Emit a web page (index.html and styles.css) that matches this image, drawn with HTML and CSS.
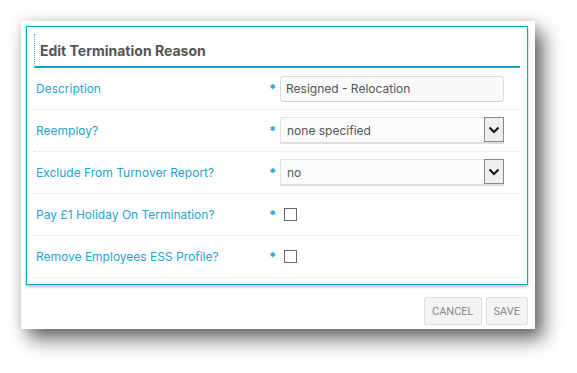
FILE: index.html
```html
<!DOCTYPE html>
<html lang="en">
<head>
    <meta charset="UTF-8">
    <title>Edit Termination Reason</title>
    <link rel="stylesheet" href="styles.css">
</head>
<body>
    <div class="dialog">
        <div class="card">
            <h3 class="card-title">Edit Termination Reason</h3>

            <div class="row">
                <label for="description">Description</label>
                <span class="req">*</span>
                <input type="text" id="description" class="text-input" value="Resigned - Relocation">
            </div>

            <div class="row">
                <label for="reemploy">Reemploy?</label>
                <span class="req">*</span>
                <div class="select-wrap">
                    <select id="reemploy">
                        <option>none specified</option>
                        <option>yes</option>
                        <option>no</option>
                    </select>
                    <span class="select-arrow">
                        <svg width="12" height="8" viewBox="0 0 12 8"><path d="M1.5 1.5 L6 6 L10.5 1.5" fill="none" stroke="#111" stroke-width="2"/></svg>
                    </span>
                </div>
            </div>

            <div class="row">
                <label for="exclude">Exclude From Turnover Report?</label>
                <span class="req">*</span>
                <div class="select-wrap">
                    <select id="exclude">
                        <option>no</option>
                        <option>yes</option>
                    </select>
                    <span class="select-arrow">
                        <svg width="12" height="8" viewBox="0 0 12 8"><path d="M1.5 1.5 L6 6 L10.5 1.5" fill="none" stroke="#111" stroke-width="2"/></svg>
                    </span>
                </div>
            </div>

            <div class="row">
                <label for="holiday">Pay £1 Holiday On Termination?</label>
                <span class="req">*</span>
                <div><input type="checkbox" id="holiday" class="check"></div>
            </div>

            <div class="row">
                <label for="ess">Remove Employees ESS Profile?</label>
                <span class="req">*</span>
                <div><input type="checkbox" id="ess" class="check"></div>
            </div>
        </div>

        <div class="actions">
            <button type="button">CANCEL</button>
            <button type="button">SAVE</button>
        </div>
    </div>
</body>
</html>
```

FILE: styles.css
```css
body { margin: 0; min-height: 373px; background-color: #fff; font-family: Inter, "Noto Sans", sans-serif; }

.dialog {
    width: 502px;
    margin: 21px 0 0 21px;
    padding: 5px 7px 4px 5px;
    background-color: #fff;
    box-shadow: 8px 10px 18px rgba(0, 0, 0, 0.6), 0 0 10px rgba(0, 0, 0, 0.12);
}

.card {
    border: 1px solid #14a0c8;
    padding: 7px 7px 6px 7px;
    box-shadow: 0 2px 3px rgba(0, 0, 0, 0.25);
}

.card-title {
    margin: 0;
    height: 32px;
    line-height: 33px;
    padding-left: 5px;
    font-size: 14px;
    font-weight: bold;
    color: #555;
    border-left: 1px dotted #3ab4d8;
    border-bottom: 2px solid #12a0c8;
}

.row {
    display: grid;
    grid-template-columns: 1fr 11px 224px;
    align-items: center;
    height: 41px;
    padding: 0 16px 0 2px;
    border-bottom: 1px dotted #ddd;
}

.row label {
    font-size: 12px;
    color: #22a6cf;
}

.req {
    color: #22a6cf;
    font-size: 13px;
    font-weight: bold;
}

.text-input {
    box-sizing: border-box;
    width: 224px;
    height: 26px;
    padding: 0 5px;
    font-family: Inter, "Noto Sans", sans-serif;
    font-size: 12px;
    color: #555;
    background-color: #fafafa;
    border: 1px solid #ddd;
    border-bottom-color: #ccc;
    border-radius: 3px;
}

.select-wrap {
    display: flex;
    height: 27px;
    box-sizing: border-box;
    background-color: #fbfbfb;
    border: 1px solid #e2e2e2;
    border-bottom: 2px solid #ddd;
    border-radius: 2px 2px 0 0;
}

.select-wrap select {
    flex: 1;
    appearance: none;
    border: none;
    background: transparent;
    padding: 0 6px;
    font-family: Inter, "Noto Sans", sans-serif;
    font-size: 12px;
    color: #555;
    outline: none;
}

.select-arrow {
    width: 18px;
    display: flex;
    align-items: center;
    justify-content: center;
    background-color: #efefef;
    border: 1px solid #888;
    margin: -1px -1px 0 0;
}

.check {
    appearance: none;
    display: block;
    width: 13px;
    height: 13px;
    margin: 0 0 0 4px;
    border: 1px solid #666;
    background-color: #fff;
}

.actions {
    display: flex;
    justify-content: flex-end;
    gap: 4px;
    margin-top: 12px;
}

.actions button {
    height: 28px;
    padding: 0 7px;
    font-family: Roboto, "Liberation Sans", sans-serif;
    font-size: 11px;
    color: #888;
    background-color: #f4f4f4;
    border: 1px solid #ddd;
    border-radius: 2px;
}
```
